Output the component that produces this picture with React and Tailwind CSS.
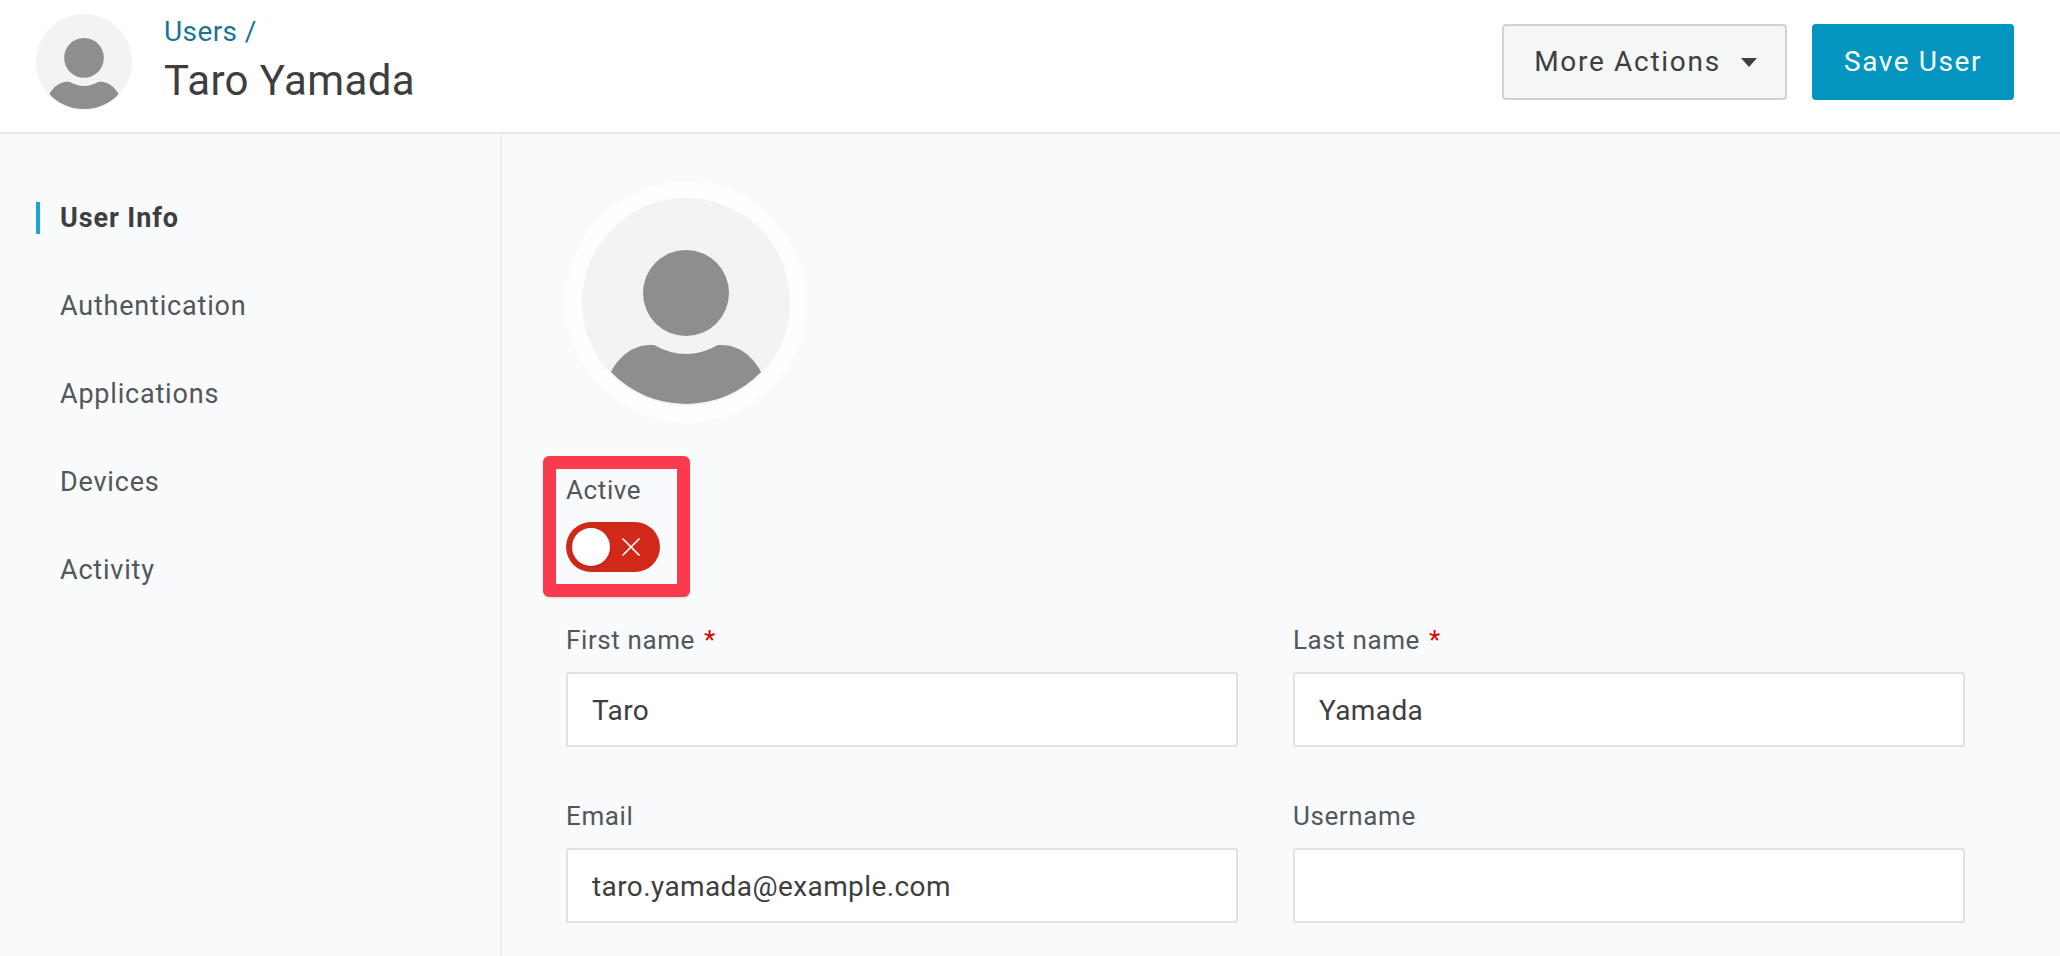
import { X } from "lucide-react";

function Avatar({ className }) {
  return (
    <svg viewBox="0 0 208 208" className={className}>
      <circle cx="104" cy="104" r="104" fill="#f3f3f3" />
      <circle cx="104" cy="95" r="43" fill="#8e8e8e" />
      <path
        d="M29 174C37 158 52 147 68 147L72 147Q104 165 136 147L140 147C156 147 171 158 179 174A104 104 0 0 1 29 174Z"
        fill="#8e8e8e"
      />
    </svg>
  );
}

function Field({ label, required, value }) {
  return (
    <div>
      <div className="h-[36px] mb-[14px] text-[26px] leading-[36px] tracking-[0.6px] text-[#53565a]">
        {label}
        {required && <span className="ml-[9px] text-[#e00000]">*</span>}
      </div>
      <div className="h-[75px] flex items-center pl-[24px] pr-[24px] pt-[2px] bg-white border-2 border-[#e0e1e2] rounded-[3px] text-[28px] tracking-[0.4px] text-[#3e3e3e]">
        {value}
      </div>
    </div>
  );
}

const navItems = ["Authentication", "Applications", "Devices", "Activity"];

export default function App() {
  return (
    <div className="h-screen overflow-hidden flex flex-col bg-[#f9fafc] font-['Roboto',sans-serif]">
      <header className="h-[134px] shrink-0 flex items-start bg-white border-b-2 border-[#e8e9ea] pl-[36px] pr-[46px]">
        <Avatar className="w-[96px] h-[96px] shrink-0 mt-[14px]" />
        <div className="ml-[32px] mt-[14px]">
          <div className="text-[28px] leading-[36px] tracking-[0.4px] text-[#1a7396]">Users /</div>
          <div className="mt-[5px] text-[42px] leading-[52px] tracking-[0.4px] text-[#3e3e3e]">Taro Yamada</div>
        </div>
        <div className="ml-auto flex gap-[25px] mt-[24px]">
          <button className="h-[76px] w-[285px] flex items-center justify-center gap-[20px] pl-[2px] bg-[#f5f6f6] border-2 border-[#d0d2d3] rounded-[4px] text-[28px] tracking-[1.7px] text-[#3e3e3e]">
            More Actions
            <span className="w-0 h-0 border-x-[8px] border-x-transparent border-t-[9px] border-t-[#3e3e3e]" />
          </button>
          <button className="h-[76px] w-[202px] bg-[#0295bf] rounded-[4px] text-[28px] tracking-[1.6px] text-white">
            Save User
          </button>
        </div>
      </header>

      <div className="flex-1 flex min-h-0">
        <nav className="w-[502px] shrink-0 border-r-2 border-[#eeeff1] pt-[40px] text-[27px] tracking-[0.8px] text-[#53565a]">
          <div className="h-[88px] flex items-center pl-[36px]">
            <span className="border-l-4 border-[#1aa3d6] pl-[20px] leading-[32px] font-bold tracking-[0.9px] text-[#3e3e3e]">
              User Info
            </span>
          </div>
          {navItems.map((item) => (
            <div key={item} className="h-[88px] flex items-center pl-[60px]">
              {item}
            </div>
          ))}
        </nav>

        <main className="flex-1 pl-[64px] pr-[95px] pt-[48px]">
          <div className="w-[240px] h-[240px] flex items-center justify-center rounded-full border-[16px] border-white/70 shadow-[0_0_6px_rgba(255,255,255,0.7)]">
            <Avatar className="w-[208px] h-[208px] shrink-0" />
          </div>

          <div className="mt-[34px] -ml-[23px] w-[147px] h-[141px] border-[13px] border-[#fb3a4e] rounded-[6px] pl-[10px] pt-[3px] shadow-sm">
            <div className="text-[26px] leading-[36px] tracking-[0.6px] text-[#53565a]">Active</div>
            <div className="mt-[14px] w-[94px] h-[50px] flex items-center pl-[6px] gap-[5px] rounded-full bg-[#d0291a]">
              <span className="w-[38px] h-[38px] rounded-full bg-white shadow-sm shrink-0" />
              <X size={32} strokeWidth={1.3} color="#ffffff" className="shrink-0" />
            </div>
          </div>

          <div className="mt-[25px] grid grid-cols-2 gap-x-[55px] gap-y-[51px]">
            <Field label="First name" required value="Taro" />
            <Field label="Last name" required value="Yamada" />
            <Field label="Email" value="taro.yamada@example.com" />
            <Field label="Username" value="" />
          </div>
        </main>
      </div>
    </div>
  );
}
